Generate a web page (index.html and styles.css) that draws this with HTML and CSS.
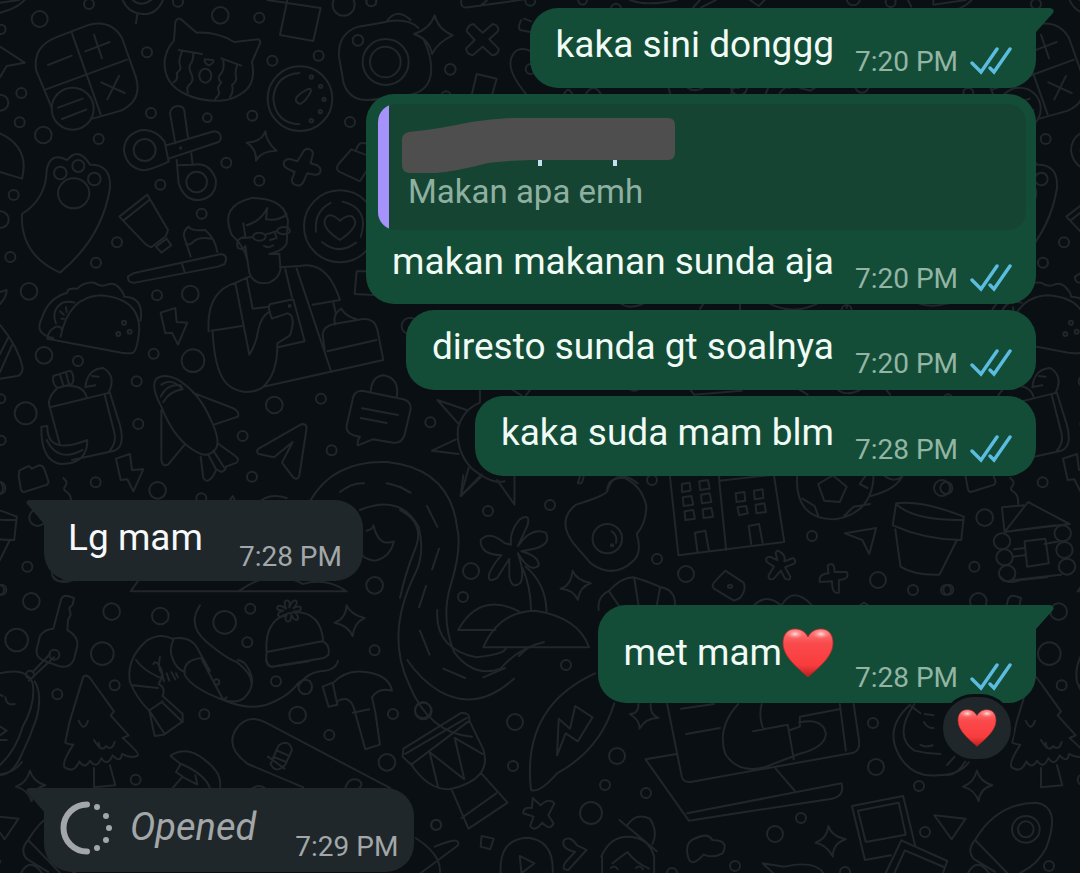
FILE: index.html
```html
<!DOCTYPE html>
<html lang="id">
<head>
<meta charset="utf-8">
<meta name="viewport" content="width=device-width, initial-scale=1">
<title>Chat</title>
<link rel="stylesheet" href="styles.css">
</head>
<body>
<svg class="symbols" width="0" height="0" aria-hidden="true">
  <defs>
    <linearGradient id="heart-shade" x1="0" y1="0" x2="0" y2="1">
      <stop offset="0" stop-color="#f8807e"/>
      <stop offset=".3" stop-color="#fb4a4c"/>
      <stop offset=".75" stop-color="#f93c3d"/>
      <stop offset="1" stop-color="#b91f21"/>
    </linearGradient>
    <radialGradient id="heart-shine">
      <stop offset="0" stop-color="#ffe3e0"/>
      <stop offset="1" stop-color="#ff8a88" stop-opacity="0"/>
    </radialGradient>
  </defs>
  <symbol id="heart" viewBox="0 0 52 50">
    <path d="M26 9C23 3 18 1 13 1 5 1 1 7 1 15c0 14 15 25 25 34 10-9 25-20 25-34C51 7 47 1 39 1c-5 0-10 2-13 8z" fill="url(#heart-shade)" stroke="#b62a2a" stroke-width=".8"/>
    <ellipse cx="13" cy="6" rx="9" ry="5" fill="url(#heart-shine)"/>
    <ellipse cx="39" cy="6" rx="9" ry="5" fill="url(#heart-shine)"/>
  </symbol>
  <symbol id="ticks" viewBox="0 0 42 28">
    <path d="M2 16l9 9L27 2M20 21l4 4L40 2" fill="none" stroke="#5bbce0" stroke-width="3.4" stroke-linecap="round" stroke-linejoin="miter"/>
  </symbol>
  <symbol id="tail-out" viewBox="0 0 28 26">
    <path d="M0 0h24q5 1 3 5L10 24v2H0z" fill="#144d37"/>
  </symbol>
  <symbol id="tail-in" viewBox="0 0 28 26">
    <path d="M28 0H3Q-1 1 1 4l17 20v2h10z" fill="#1f272a"/>
  </symbol>
</svg>

<svg class="doodles" aria-hidden="true">
  <defs>
    <g id="tile">
      <g transform="scale(.3333)">
        <circle cx="119" cy="57" r="24"/><circle cx="267" cy="12" r="15"/><circle cx="661" cy="46" r="25"/><circle cx="778" cy="53" r="15"/><circle cx="534" cy="5" r="15"/><circle cx="441" cy="157" r="15"/><circle cx="817" cy="182" r="15"/><circle cx="956" cy="167" r="15"/><circle cx="1031" cy="14" r="33"/><circle cx="1114" cy="4" r="15"/><circle cx="1074" cy="121" r="16"/>
        <circle cx="3" cy="88" r="14"/><circle cx="64" cy="279" r="15"/><circle cx="1" cy="308" r="24"/><circle cx="59" cy="367" r="15"/><circle cx="130" cy="405" r="25"/><circle cx="296" cy="417" r="15"/><circle cx="453" cy="339" r="15"/><circle cx="622" cy="353" r="13"/><circle cx="757" cy="347" r="15"/><circle cx="1050" cy="366" r="15"/><circle cx="679" cy="488" r="15"/><circle cx="778" cy="542" r="15"/><circle cx="481" cy="554" r="15"/><circle cx="41" cy="585" r="15"/><circle cx="1" cy="659" r="25"/><circle cx="605" cy="641" r="15"/><circle cx="351" cy="727" r="15"/><circle cx="31" cy="771" r="15"/><circle cx="288" cy="788" r="15"/><circle cx="87" cy="874" r="25"/><circle cx="471" cy="886" r="15"/><circle cx="571" cy="882" r="25"/>
        <path d="M0 38q50-12 74-38M0 140l74 48-54 10-20 34"/>
        <path d="M108 210q-10-70 60-98l100-38q66-15 98 40l42 118q20 70-45 100l-85 24M108 210l48 115M216 100l86 243M138 268l243-89M256 154l73-28M282 104l24 71M144 195l71-28M304 247l70 32M357 228l-35 70M174 323l74-27M186 357l73-28"/>
        <circle cx="218" cy="326" r="63"/>
        <path d="M368 0q15 38 58 42t63-42M398 0q25 22 56 0M412 42l-4 28"/>
        <path d="M526 66q6-18 22-4l42 36q65-2 112 28l70-8q10 0 8 12l-24 56q12 60-20 86-34 28-76 30-60 2-104-20-66-30-62-100 4-34 28-60zM536 150l70 12M664 175l60 22M546 155q-12 30-6 42t-10 22q6 20-10 28M580 160q0 22-8 32t2 30-6 32q-10 10-4 24M670 180q4 30-8 42t2 26q-14 14-8 24t-10 24M712 195q-8 20-4 34t-12 26q6 20-6 36M614 178l24 2q8 6-10 16-16-6-14-18"/>
        <ellipse cx="616" cy="227" rx="18" ry="21"/>
        <path d="M802 0l160 24-22 99-100-18L862 0"/>
        <circle cx="900" cy="296" r="97"/><path d="M898 219q-72 6-78 76 6 74 78 78M888 296q4-12 34-28 14-6 10 8-16 30-32 36-14-4-12-16"/>
        <circle cx="934" cy="231" r="5"/><circle cx="962" cy="259" r="5"/><circle cx="972" cy="298" r="5"/><circle cx="961" cy="335" r="5"/><circle cx="934" cy="362" r="5"/>
        <path d="M1145 68l-70 12q-62 20-58 90l14 80q18 52 74 50h45"/>
        <circle cx="434" cy="450" r="33"/><circle cx="590" cy="546" r="31"/><path d="M494 425q-30-40-72-34-50 14-50 62 8 50 58 58 20 0 76-26zM500 436l142-42q24 2 20 24l-6 8-150 50M526 430l-16-90q4-22 24-22t20 22l10 72M530 480l6 70q18 54 64 50 50-10 48-60-18-54-68-46l-48 2M574 460l4 34"/><circle cx="542" cy="444" r="2"/>
        <path d="M796 394q-10 32-56 34 30 18 28 54 16-30 62-30-30-24-34-58zM906 462q8-20 24-14 12 6 8 16l-6 26 20 6q14 8 8 22-6 8-16 6l-22-4-12 26q-8 16-26 8-10-6-8-16l8-22-22-10q-14-8-10-20 8-12 20-8l20 6z"/>
        <path d="M1054 448l58 22q10 10-4 30l-28 44-64-30q-10-8 0-22zM1068 452q6-28 28-22t8 38"/>
        <path d="M66 642q72-46 74-130 8-58 62-32 34-42 68 14 64-2 60 70-24 150-150 254Q60 764 66 642zM0 400q90 42 66 136L0 516"/>
        <circle cx="181" cy="519" r="19"/><circle cx="235" cy="498" r="18"/><circle cx="283" cy="537" r="19"/><ellipse cx="221" cy="580" rx="47" ry="45"/>
        <path d="M358 650l84-66 62 106-6 18-44 34-16-8zM370 662l78-62M468 740l32-24 14 20-30 22z"/>
        <path d="M400 820l264-58q22 4 10 30l-20 8-248 48q-24 2-22-18zM546 792l8 24M572 770l-20-62q-2-16 14-28 8 14 50 10 30 26 36 66M558 732q10 6 24-8t52-8"/>
        <path d="M746 806q-4-60-50-100-40-90 60-112 82 0 104 50-28 20-62 14l4-34q-20 40-62 52M730 670l6 40q-32 6-22 34 16 8 22-6l12 80q14 40 60 30 28-12 34-40l-4-46h-30q44-10 52-32l4-70-14-34M792 738q14 8 28-2"/>
        <ellipse cx="778" cy="710" rx="19" ry="12"/><ellipse cx="851" cy="692" rx="19" ry="11"/><path d="M796 704l34-10M758 712l-30 2M824 696l6 18-20 6"/>
        <circle cx="1020" cy="679" r="108"/><path d="M948 695q-6-60 44-86M1028 605q82 20 54 106M966 726q50 42 102 2M1020 720q-50-32-46-58 10-32 46 0 38-30 46 4 0 22-46 54"/>
      </g>
      <g transform="translate(0 250) scale(.3333)">
        <circle cx="132" cy="316" r="25"/><circle cx="234" cy="333" r="15"/><circle cx="461" cy="311" r="15"/><circle cx="579" cy="332" r="34"/><circle cx="410" cy="394" r="15"/><circle cx="77" cy="490" r="33"/><circle cx="415" cy="522" r="15"/><circle cx="823" cy="465" r="25"/><circle cx="963" cy="446" r="15"/><circle cx="728" cy="558" r="15"/><circle cx="995" cy="601" r="15"/><circle cx="1291" cy="517" r="15"/><circle cx="756" cy="680" r="15"/><circle cx="287" cy="697" r="15"/><circle cx="473" cy="721" r="25"/><circle cx="604" cy="745" r="15"/><circle cx="3" cy="446" r="13"/><circle cx="3" cy="571" r="14"/><circle cx="-2" cy="714" r="18"/><circle cx="1230" cy="228" r="25"/>
        <path d="M0 126l20-6q0 20-20 42M0 225q54 64 68 128 0 14-12 24L0 386M0 312l24-48M0 366l36-80"/>
        <path d="M160 264q-60-12-34-60 18-60 76-76 0-16 30-12 20-20 50-18 20 14 40 6t36 10 14 26q60 0 50 72M182 260q24-120 120-124 114 8 116 100-6 74-24 74-12 0-30-2l-222-42q2-24 26-36 18-2 18 14M168 220q-16-40 20-62 18-6 36 0M180 184l12 10M198 172l2 14M184 206h8"/>
        <circle cx="372" cy="218" r="6"/><circle cx="355" cy="252" r="6"/><circle cx="389" cy="245" r="6"/>
        <path d="M482 188l44-14 4 42 32 2-28 66-18-36-20 2zM348 626l42-14 6 48 34-2-30 66-18-36-20 2z"/>
        <path d="M626 244q-8-120 82-146l40-18M1020 150q-38-118-120-102l-60 4M706 98l42 216q20-30 26-70 8-46 36-60M740 84l18 92 50-6M856 58l20 84M890 56l102 304M634 242l92-14M1020 150l-82 14M638 244q6 140 56 168 50 28 94 0 46-40 44-132l38-24q20-60-8-66l-46 16q-16-40-4-44l68-14 34 126-80 18M790 410l360-80-18-92q-10-40-60-28l-70 12q-30 6-34 30l6 48M982 304l148-34M1006 224q-10-30 18-48 12 22 46 32M1000 156l8 36"/>
        <circle cx="869" cy="168" r="3"/>
        <path d="M1130 64h-60l-6 68 70 4"/>
        <path d="M160 378l50-16q12 8 10 30l-4 10-44 12q-16-12-12-36M180 374l10 32M198 368l8 32M172 414q-34 32-22 60l30 112M150 472l180-44M330 430l30 96q18 70-24 78l-120 26M314 434l28 110q10 34-14 60M190 408q60-6 70 34M256 412q6-56 54-58 40 24 16 74M276 378l20 2M260 410l26-4M124 530l18-2q-2 90 120 42 0 74-80 72-60-10-58-112M140 570q34 70 108 30"/>
        <path d="M484 470q-32-60-16-82 20-20 64 0 66 40 100 120 32 66 14 90-22 26-52 10-70-34-110-138M482 440q20-40 60-34l6 12q-40 6-58 38M484 404q30-22 60 10M578 428l120 46q22 10 16 26l-72 24M484 480v150q4 22 20 14l50-60M602 620l8 64q12 18 28-4l12-22 14 8q14-6 14-16l32-12q10-10-4-20l-50-36M624 612l24 46M640 602l32 50"/>
        <path d="M776 596l130-74q14 0 14 12l-22 144q-8 16-20 2l-32-42 32-62-56 46-46-10q-10-8 0-16zM1060 440q6-18 26-18l124 26q24 6 22 30l-18 76q-10 28-34 24l-62-10-44 18q-4-10 6-26-50-6-38-42zM1112 428q2-50 40-52 48 10 38 66M1086 475l108 20M1082 504l78 15"/>
        <path d="M1440 422v36q-50 20-66 76-6 70 40 120 60 50 100 40M1400 480l-88-30 66 74M1368 568l-72 34 80 10M1406 654l-24 84 60-56"/>
        <path d="M56 680l2-18 28-14 10 8 20-10q14 0 18 14l12 36-4 8-70 22q-8 0-10-12zM190 684q16 14 6 24t4 18 14 36"/>
        <path d="M932 750q70-120 230-114 190 20 210 200 14 60-20 170-30 100 10 200 60 80 140 50 50-60 130-80M1020 726q36-28 72-26M1160 700q40 8 72 28M690 750l8-12 6 12M786 750q30-20 74-6"/>
      </g>
      <g transform="translate(0 480) scale(.3333)">
        <circle cx="113" cy="113" r="25"/><circle cx="82" cy="260" r="15"/><circle cx="4" cy="329" r="15"/><circle cx="94" cy="364" r="25"/><circle cx="335" cy="395" r="25"/><circle cx="481" cy="408" r="25"/><circle cx="751" cy="386" r="15"/><circle cx="674" cy="427" r="34"/><circle cx="742" cy="487" r="15"/><circle cx="50" cy="480" r="34"/><circle cx="307" cy="521" r="34"/><circle cx="1124" cy="316" r="25"/><circle cx="1124" cy="511" r="15"/>
        <path d="M1080 90q120-50 176 50 20 80-10 140-90 180-20 330 60 150 190 160M1100 152q20-4 20-16 10 40 30 50 20 4 32-2-12 50-58 58-30-4-40-20M160 290q20 26 60 10l80-8M416 300l-24 34h648q-60-42-132-22-90-50-190 20"/>
        <path d="M184 356q8-12 20-8l18 6-4 20-10 10 4 20-8 16-2 30q34 20 30 48l-10 40q-14 30-46 20l-50-18q-20-12-16-32l10-40q12-20 40-22zM162 532l-76 70M150 522l-52 54"/><circle cx="163" cy="524" r="15"/>
        <path d="M800 520q-10-110 84-124 80 0 86 90M800 516l166-32q24 6 20 40l-14 10-158 26q-20-8-14-44"/>
        <path d="M858 386q-10-28 6-24 8 4 4 20 10-28 22-18 4 6-10 20 28-10 22 4-4 8-20 6 20 20 8 26-10 0-16-16 0 24-12 20-10-4-2-20-20 12-26 2 0-10 16-14-22 0-18-12 6-8 26 6z"/>
        <path d="M1040 376q-2 40-36 52 40 8 54 40 4-40 36-54-42-10-54-38zM600 376q-40 60 20 110t90 60q44 34 44 60M1014 542q-6 30-54 32-40 6-62 40"/>
      </g>
      <g transform="translate(0 660) scale(.3333)">
        <circle cx="172" cy="103" r="15"/><circle cx="344" cy="76" r="15"/><circle cx="613" cy="163" r="15"/><circle cx="828" cy="64" r="15"/><circle cx="893" cy="165" r="25"/><circle cx="988" cy="225" r="15"/><circle cx="1179" cy="162" r="15"/><circle cx="1270" cy="153" r="25"/><circle cx="1161" cy="307" r="25"/><circle cx="407" cy="359" r="15"/><circle cx="1309" cy="494" r="15"/><circle cx="90" cy="44" r="12"/>
        <path d="M0 40q80-20 98 30 10 60-30 130-20 70-68 115M104 64q24 40 6 110-20 60-50 120-24 50-60 52M0 104l8 4M16 112q4 26 28 20M0 200l20 12-20 14M0 240h20"/>
        <path d="M208 188l42-138q10-8 20 4l72 100-10 12 54 60-18 8q50 44 46 52-20 12-48-4-4 30-28 4-16 36-34 8-14 36-34 8-16 28-32 2-16 38-44 18-10-14 26-68-28-4-24-8zM282 324v58l64-6-16-60M236 182q14 30 24 10l4-10M282 240q24 40 36 18 18 16 26-12M296 248l4 16"/>
        <path d="M554 40q-4-40 50-46M606 0l64 120 10-8M554 44q20 40 116 76 40 10 60-4 44-40 14-92-10-20-30-24M670 120q70 30 124 16 70-24 100-66 20-18 36-6 14 20-4 36-24 8-30-14-2-14 6-20M390 66q-12-70 50-124 40-24 76-6 60-10 80 36l34 60M390 66q20 50 58 86l16 76 28-4 56-40v-22l-60-54q10-24-12-36 18-30 4-52t-20-8M398 76l76 8M450 150l38-26M408 0q20 30 70 52M448 152l46 70M488 128l60 58M480-10q-8 40 8 52M520-60q-14 30-2 56 10 30 36 40M486 40l6 24M500 40l8 22M514 36l12 22M528 40l6 12"/><circle cx="650" cy="66" r="8"/>
        <path d="M968 80l30-12 14 66-26 6zM998 70q40-44 100-34 70 10 78 56-40-10-60 20l10 44 14 98-44 14-30-108q-12-60-54-36M1058 158l50-10"/>
        <path d="M744 312q-70-50-36-104 34-50 90-20l372 196M744 312l166 70M836 256q32-20 40 14l-20 44q-28 30-44-2zM828 270l36 16M820 290l38 16M804 290l50 36M1036 384q10-34 40-24 16 12 2 24M758 384q20-12 36 0"/>
        <path d="M512 286q50-30 100 12 56 40 48 84M512 288l30 24-14 24 20 14-30 34M544 312q70 30 86 72M550 352l42 22-6-28"/>
        <path d="M798 0q6 24 20 20l110-16"/>
        <path d="M1222 0q40 60 100 96 110 60 220-40"/>
      </g>
      <g transform="translate(360) scale(.3333)">
        <circle cx="77" cy="186" r="69"/><circle cx="76" cy="186" r="46"/><circle cx="34" cy="4" r="15"/><circle cx="271" cy="208" r="16"/><circle cx="511" cy="2" r="15"/><circle cx="668" cy="1" r="13"/><circle cx="768" cy="26" r="15"/><circle cx="258" cy="288" r="14"/><circle cx="512" cy="207" r="15"/>
        <path d="M65 68q76-18 110 16M190 116q30 64 22 110-10 52-72 60L25 300M80 64q30-44 72-4M224 46q-14 40-62 56 46 16 54 60 18-36 62-56-44-18-54-60zM340 72l28 26 30-26q20 4 16 22l-26 24 28 28q0 18-20 20l-28-26-30 26q-18-4-20-20l26-26-24-26q2-18 20-22zM492 56l22 8M484 60q-12 20-4 30l30 6M350 222l60 14-14 50M350 222l-14 60M500 284q-60-70-46-110t60-20M304 0q-4 26 20 22l170-24M360 18l20-16M810 0q50 20 140 0M1000 22l20-22M1024 22l44-22M612 284q12-30 26 0M676 284q24-40 48 0M926 264l4 16M984 264q20 14 46 0M1114 284q0-26 22-20"/>
      </g>
      <g transform="translate(720) scale(.3333)">
        <circle cx="400" cy="-4" r="20"/><circle cx="512" cy="6" r="15"/><circle cx="57" cy="262" r="24"/><circle cx="426" cy="258" r="20"/><circle cx="380" cy="930" r="15"/>
        <path d="M90 0l26 18 20-20M640 0v14l98-14M564 0l10 20M136 284l10-24M176 284q20-30 34-20M240 264l32 8 14-10M60 910v20M150 912q70 34 140 0M600 912q40 10 74 0"/>
      </g>
      <g transform="translate(400 300) scale(.4337 .3333)">
        <path d="M260 270l20 16M300 270l-10 16M530 268q10 8 20 0M670 270l8 14 110-12M920 268l20 16M1010 270q20 20 50 0M1120 268l10 16M410 550l6-26M478 570q20-70 70-20M1030 10v14M700 10l-8 16M510 12q20 16 50 0"/>
      </g>
      <g transform="translate(400 470) scale(.4337 .3333)">
        <path d="M146 16l-6 62 48-64M224 30l40 74V16M410 36q10 16 14-22M0 50l20 16M62 108l24 62M90 236l-16 62M60 348l-16 64M0 120q60 40 34 120Q12 310 0 384"/>
        <path d="M256 224q-4-40 20-76 26-20 18 18l-22 62q30-58 64-40 14 34-26 48l-30 8q40 14 40 42-20 26-48-36 16 60 6 88-20 22-26-18v-54l-28 58q-24 18-18-14 10-30 28-54-50-2-48-46 20-30 56 10zM282 292q20 60 20 130M290 290q46 50 48 134"/>
        <path d="M478 64q0-44 40-40 40 24 50 84 0 50-22 84 12 54-6 78-46 60-100 10l-40-60q-40-70 6-116 66-26 72-40M488 184q14 12 10 34"/><ellipse cx="478" cy="206" rx="34" ry="44"/><circle cx="489" cy="226" r="3"/>
        <path d="M622 14l20 242 244-40-24-202-126 18 16 208M736 16v16M650 42l18-4 2 24-20 4zM690 34l20-4 4 26-22 4zM652 82l20-4 4 26-22 4zM694 74l20-4 4 26-22 4zM656 124l20-4 4 26-22 4zM698 118l20-4 4 26-22 4zM774 70l20-4 2 26-20 4zM816 62l20-4 2 26-20 4zM778 112l20-4 4 22-20 6zM820 104l20-4 4 26-22 4zM686 246l-6-58 24-6 8 58M810 222l-6-54 24-6 8 56"/>
        <path d="M916 14q-8 134 88 134 86-20 88-132M964 42l34-26 32 34-16 46-36-4zM1074 16l-14 26 18 12M928 86l28 22 8 28M1024 138l22-28 38-8M1086 78q60-20 74-64M1116 16q20 24 42 4"/>
        <path d="M1026 190l72-16-16 78-16-42zM876 246q14 10 10 28l20-10q8 6 4 16l-22 12 12 28q0 14-12 6l-10-24-16 24q-14 6-12-10l12-26-16-14q-6-14 6-16l18 10-4-22q4-10 10-2zM986 286q16-14 16 20h28q8 22-18 24l0 38q-16 6-16-34l-28 2q-4-24 20-26zM750 302l42 36q8 20-8 46l-14 8-46-36q-8-10 4-24z"/><circle cx="761" cy="349" r="5"/>
        <path d="M398 302q-4 46-28 54 30 2 40 34 4-40 30-50-34-10-42-38zM458 420q-4-40 24-58 30-40 56-40 20 6 64 30 34 8 32 56M482 364l24 46M540 324l10 82M600 352l-8 54M816 406q30-38 62 0M880 406q26-60 70 0M1060 406l10-8 10 8"/>
        <path d="M1144 100q60-10 156 40l-6 70q-80 0-158-44zM1144 102q40 50 156 48M1142 178l12 112q30 26 90 24l40-104"/>
        <path d="M1388 112l50-6M1388 114l6 72 54-90 96 66-150 24M1412 182l100-16M1416 238l24-4M1412 260l28-4M1486 222l34-8M1414 330l110-16M1440 214l48-8 8 74-50 10z"/>
        <ellipse cx="1388" cy="214" rx="19" ry="24"/><ellipse cx="1394" cy="262" rx="19" ry="24"/><ellipse cx="1400" cy="310" rx="19" ry="24"/><ellipse cx="1528" cy="190" rx="19" ry="24"/><ellipse cx="1532" cy="240" rx="19" ry="24"/><ellipse cx="1538" cy="290" rx="19" ry="24"/>
      </g>
      <g transform="translate(400 590) scale(.4337 .3333)">
        <path d="M134 120q50-116 140-56M134 120h86M192 172q36-108 120-110 100 20 124 110zM86 60q-6 116 90 142 70-10 68-30M274 198l20-24M46 122l22 72M100 236l50 28M192 262l50-28"/>
        <path d="M8 476l134-108q20 0 18 24L26 524 6 500zM12 492L154 384M24 520q40 80 90 78 100-30 78-120l-32-86M68 486l20 106M68 486l80 82M126 444l22 122M126 444l64 48M120 602l38 114 90-78-62-90M142 684l80-74"/>
        <path d="M450 250Q280 350 302 600q20 10 60-50 100-70 132-210M366 386l26 30 12-68 40 34-34 72-28-24-20 66zM550 342q0 30-20 30 24 20 22 44 16-34 44-32-20-10-18-42"/>
        <path d="M616 342l34 220q4 16 20 14l376-88q16-8 12-40l-12-106M638 492l-72 16 100 184 330-66q30-8 22-46L662 670M866 536l44 66M648 356l76-14M660 432l78-18M780 342q-50 70-30 150 30 60 90 40l80-40q60-20 62-60-6-50-62-34M814 424l80-20 14 104M834 342q-8 40 4 76M900 420l22-10v-30l90-22M1014 342l14 140"/>
        <path d="M1176 344q-60 70-26 150 30 70 90 62 50 0 72-40M1180 350l20 20M1186 342q-50 96 0 140 30 10 60 10M1208 396q8 20 22 18M1200 464q10 10 28 2M1210 372l20 4"/>
        <path d="M1330 542q-6 36-32 48 28 10 36 44 4-40 32-48-28-10-36-44zM988 708q-4 40-30 50 26 6 40 42 0-40 30-52-34-10-40-40zM1232 676l72 10-32 62-22-40z"/>
        <path d="M1042 648l118-30 28 150M1042 648l30 162 60-14M1056 662l94-24 16 96-92 22zM1120 849l36-98 106 62-10 36M1140 849l24-68 90 50"/>
        <path d="M1326 750q50-110 140-112 60 10 24 136-20 50-60 75M1326 750q-20 30-4 56l50 40M1326 750l74 99M1310 849q20-50 48 0"/><ellipse cx="1443" cy="718" rx="32" ry="40"/><ellipse cx="1443" cy="718" rx="18" ry="24"/>
        <path d="M306 624l18 22q20-24 32-6l-14 36 12 24q-8 24-26-2-18 30-28 10l8-28-24-10q0-20 20-16zM188 738l28 8-8 32-22-8zM232 849q-4-104 64-106 60 10 56 106M276 798l34 22-30 30zM404 786q-34-10-26-36 16-14 30 16l22 14-42 60q-18 0-6-24l20-28M36 744q60 50 56 105M80 770q60-34 54-4l-86 83"/>
        <path d="M464 800q20-60 60-60 50 0 62 60v49M466 800v49M524 786l-34 34M524 786q20 34 50 50M506 690l86 94M524 706q20-40 52-20 20 40 6 76M680 746q30-20 40 4 40 0 24 40-24 16-44 4-34 50-38-10-2-30 20-40M836 820l50 10q70-20 90 19M836 820l24 29M486 834q10-10 16 4M544 834q10-10 16 4"/>
      </g>
      <circle cx="488" cy="511" r="5"/><circle cx="550" cy="505" r="5"/><circle cx="652" cy="480" r="5"/><circle cx="657" cy="559" r="5"/><circle cx="471" cy="571" r="8"/><circle cx="463" cy="597" r="5"/><circle cx="686" cy="574" r="8"/><circle cx="812" cy="536" r="5"/><circle cx="878" cy="580" r="8"/><circle cx="913" cy="590" r="5"/><circle cx="946" cy="590" r="5"/><circle cx="942" cy="488" r="8"/>
      <circle cx="423" cy="710" r="8"/><circle cx="515" cy="722" r="8"/><circle cx="566" cy="665" r="5"/><circle cx="617" cy="756" r="8"/><circle cx="513" cy="766" r="5"/><circle cx="605" cy="785" r="5"/><circle cx="646" cy="793" r="5"/><circle cx="591" cy="813" r="11"/><circle cx="436" cy="825" r="5"/><circle cx="873" cy="723" r="5"/><circle cx="876" cy="767" r="8"/><circle cx="919" cy="786" r="5"/><circle cx="801" cy="818" r="5"/><circle cx="775" cy="834" r="8"/><circle cx="925" cy="832" r="5"/><circle cx="735" cy="866" r="5"/><circle cx="672" cy="873" r="5"/><circle cx="845" cy="872" r="5"/><circle cx="1049" cy="866" r="5"/>
    </g>
  </defs>
  <use href="#tile"/>
  <use href="#tile" x="947"/>
  <use href="#tile" x="-947"/>
</svg>

<main class="chat">
  <article class="bubble out tailed">
    <svg class="tail" aria-hidden="true"><use href="#tail-out"/></svg>
    <div class="line">
      <p class="text">kaka sini donggg</p>
      <time class="time">7:20 PM</time>
      <svg class="ticks" role="img" aria-label="Read"><use href="#ticks"/></svg>
    </div>
  </article>

  <article class="bubble out">
    <blockquote class="quote">
      <svg class="redacted" viewBox="0 0 274 55" aria-hidden="true">
        <path d="M136 42h4v6h-4zM211 42h4v6h-4z" fill="#c8def0"/>
        <path d="M7 14q30-3 62-10Q90 1 110 0h156q7 0 7 7v28q0 7-7 7H130q-30 1-44 3-30 8-52 10H7q-7-1-7-8V22q0-7 7-8z" fill="#4e4e4e"/>
      </svg>
      <p class="quoted">Makan apa emh</p>
    </blockquote>
    <div class="line">
      <p class="text">makan makanan sunda aja</p>
      <time class="time">7:20 PM</time>
      <svg class="ticks" role="img" aria-label="Read"><use href="#ticks"/></svg>
    </div>
  </article>

  <article class="bubble out">
    <div class="line">
      <p class="text">diresto sunda gt soalnya</p>
      <time class="time">7:20 PM</time>
      <svg class="ticks" role="img" aria-label="Read"><use href="#ticks"/></svg>
    </div>
  </article>

  <article class="bubble out">
    <div class="line">
      <p class="text">kaka suda mam blm</p>
      <time class="time">7:28 PM</time>
      <svg class="ticks" role="img" aria-label="Read"><use href="#ticks"/></svg>
    </div>
  </article>

  <article class="bubble in tailed turn">
    <svg class="tail" aria-hidden="true"><use href="#tail-in"/></svg>
    <div class="line">
      <p class="text">Lg mam</p>
      <time class="time">7:28 PM</time>
    </div>
  </article>

  <article class="bubble out tailed turn with-emoji reacted">
    <svg class="tail" aria-hidden="true"><use href="#tail-out"/></svg>
    <div class="line">
      <p class="text">met mam<svg class="emoji" role="img" aria-label="Red heart"><use href="#heart"/></svg></p>
      <time class="time">7:28 PM</time>
      <svg class="ticks" role="img" aria-label="Read"><use href="#ticks"/></svg>
    </div>
    <button class="reaction" type="button" aria-label="Red heart reaction"><svg class="reaction-heart" aria-hidden="true"><use href="#heart"/></svg></button>
  </article>

  <article class="bubble in tailed once">
    <svg class="tail" aria-hidden="true"><use href="#tail-in"/></svg>
    <div class="line">
      <svg class="once-icon" viewBox="0 0 54 54" aria-hidden="true">
        <path d="M27 3.500a23.500 23.500 0 0 0 0 47" fill="none" stroke="#a3a7a9" stroke-width="6" stroke-linecap="round"/>
        <g fill="#a3a7a9"><circle cx="37" cy="6" r="3"/><circle cx="46" cy="15" r="3"/><circle cx="49" cy="27" r="3"/><circle cx="46" cy="39" r="3"/><circle cx="37" cy="47" r="3"/></g>
      </svg>
      <p class="text opened">Opened</p>
      <time class="time">7:29 PM</time>
    </div>
  </article>
</main>
</body>
</html>
```
FILE: styles.css
```css
* {
  box-sizing: border-box;
}

body {
  margin: 0;
  min-height: 100vh;
  position: relative;
  overflow: hidden;
  background: #0a0f13;
  font-family: Roboto, "Noto Sans", sans-serif;
}

.symbols {
  position: absolute;
}

.doodles {
  position: absolute;
  inset: 0;
  width: 100%;
  height: 100%;
  fill: none;
  stroke: #20262a;
  stroke-width: 2px;
  stroke-linejoin: round;
  stroke-linecap: round;
}

.doodles path,
.doodles circle,
.doodles ellipse {
  vector-effect: non-scaling-stroke;
}

.chat {
  position: relative;
  display: flex;
  flex-direction: column;
  gap: 6px;
  padding: 8px 44px 0;
}

.bubble {
  position: relative;
  border-radius: 28px;
  max-width: 90%;
}

.out {
  align-self: flex-end;
  background: #144d37;
  color: #f1fbf6;
}

.in {
  align-self: flex-start;
  background: #1f272a;
  color: #f6f8f9;
}

.out.tailed {
  border-top-right-radius: 0;
}

.in.tailed {
  border-top-left-radius: 0;
}

.turn {
  margin-top: 18px;
}

.tail {
  position: absolute;
  top: 0;
  width: 28px;
  height: 26px;
}

.out .tail {
  right: -18px;
}

.in .tail {
  left: -18px;
}

.line {
  display: flex;
  align-items: flex-end;
  padding: 15px 24px 10px 26px;
}

.text {
  margin: 0 auto 0 0;
  padding-bottom: 11px;
  font-size: 37px;
  line-height: 44px;
}

.time {
  margin-left: 21px;
  font-size: 28px;
  line-height: 32px;
  color: #93b5a5;
  white-space: nowrap;
}

.ticks {
  flex: none;
  width: 42px;
  height: 28px;
  margin: 0 0 3px 12px;
}

.quote {
  margin: 0 10px 0 12px;
  padding: 14px 14px 19px 24px;
  border-radius: 18px;
  background: linear-gradient(to right, #a791fa 11px, #154433 11px);
}

.bubble:has(.quote) {
  padding-top: 10px;
}

.quote + .line {
  padding-top: 10px;
  padding-bottom: 9px;
}

.redacted {
  display: block;
  width: 274px;
  height: 55px;
}

.quoted {
  margin: 0;
  padding-left: 6px;
  font-size: 33px;
  line-height: 38px;
  color: #8fb0a1;
}

.in .line {
  padding: 16px 21px 8px 24px;
}

.in .text {
  padding-bottom: 13px;
}

.in .time {
  margin-left: 36px;
  color: #a3a7a9;
}

.with-emoji .line {
  padding-top: 23px;
  padding-bottom: 9px;
}

.with-emoji .text {
  display: flex;
  align-items: center;
  padding-bottom: 16px;
}

.emoji {
  width: 52px;
  height: 50px;
}

.reacted {
  margin-bottom: 79px;
}

.reaction {
  position: absolute;
  right: 22px;
  bottom: -59px;
  width: 74px;
  height: 68px;
  padding: 0;
  display: grid;
  place-items: center;
  border: 3px solid #0a0f13;
  border-radius: 34px;
  background: #1f272a;
}

.reaction-heart {
  width: 40px;
  height: 38px;
}

.once .line {
  padding: 13px 16px 9px;
}

.once-icon {
  flex: none;
  align-self: flex-start;
  width: 54px;
  height: 54px;
}

.once .opened {
  margin-left: 16px;
  padding: 4px 0 14px;
  font-size: 38px;
  font-style: italic;
  color: #a3a7a9;
}

.once .time {
  margin-left: 39px;
}
```
